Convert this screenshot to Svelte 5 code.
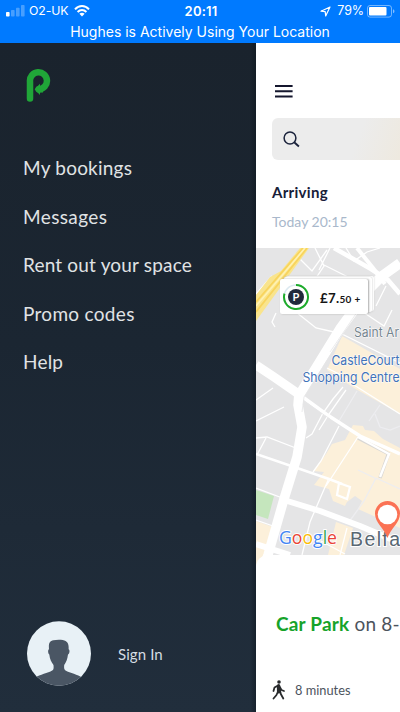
<script>
  const menu = [
    { label: 'My bookings', spacing: 0.22 },
    { label: 'Messages', spacing: 0.38 },
    { label: 'Rent out your space', spacing: 0.18 },
    { label: 'Promo codes', spacing: 0.3 },
    { label: 'Help', spacing: 0.2 }
  ];
  const google = [
    ['G', '#4285f4'], ['o', '#ea4335'], ['o', '#fbbc05'],
    ['g', '#4285f4'], ['l', '#34a853'], ['e', '#ea4335']
  ];
</script>

<div class="phone">
  <header>
    <div class="status">
      <div class="left">
        <svg width="19" height="12" viewBox="0 0 19 12" fill="#fff">
          <rect x="0" y="7" width="3.6" height="4.5" rx=".8" />
          <g opacity=".28"><rect x="5" y="5" width="3.6" height="6.5" rx=".8" /><rect x="10" y="2.8" width="3.6" height="8.7" rx=".8" /><rect x="15" y="0" width="3.6" height="11.5" rx=".8" /></g>
        </svg>
        <span class="carrier">O2-UK</span>
        <svg class="wifi" width="16" height="12" viewBox="0 0 16 12" fill="none" stroke="#fff" stroke-width="2">
          <path d="M1 4.3C5-.1 11-.1 15 4.3M3.6 7c2.6-2.7 6.2-2.7 8.8 0" /><path d="M5.4 8.7c1.5-1.4 3.7-1.4 5.2 0L8 11.4z" fill="#fff" stroke="none" />
        </svg>
      </div>
      <b>20:11</b>
      <div class="right">
        <svg width="11" height="11" viewBox="0 0 11 11" fill="none" stroke="#fff" stroke-width="1.2" stroke-linejoin="round"><path d="M10 1 1 5.2l4.2.5.5 4.3z" /></svg>
        <span class="pct">79%</span>
        <svg class="battery" width="28" height="13" viewBox="0 0 28 13"><rect x=".5" y=".5" width="24" height="11.6" rx="2.5" fill="none" stroke="#fff" stroke-opacity=".45" /><rect x="2" y="2" width="17.5" height="8.6" rx="1" fill="#fff" /><path d="M26 4.3c2 .7 2 3.3 0 4z" fill="#fff" opacity=".5" /></svg>
      </div>
    </div>
    <div class="notice">Hughes is Actively Using Your Location</div>
  </header>

  <div class="body">
    <aside>
      <svg class="logo" width="26" height="34" viewBox="0 0 26 34">
        <path d="M4 29.600V12.700A8.500 8.500 0 1 1 12.700 20.300" fill="none" stroke="#20a638" stroke-width="6.500" stroke-linecap="round" />
        <path d="M8.600 20.300 14 14.800v3h3v5.700h-3v2.600z" fill="#20a638" />
      </svg>
      <nav>
        {#each menu as item}
          <a href="#menu" style="letter-spacing:{item.spacing}px">{item.label}</a>
        {/each}
      </nav>
      <div class="account">
        <svg width="64" height="65" viewBox="0 0 64 65">
          <defs><clipPath id="avatar"><ellipse cx="32" cy="32.5" rx="32" ry="32.2" /></clipPath></defs>
          <g clip-path="url(#avatar)"><rect width="64" height="65" fill="#e8f1f6" />
            <path d="M22.3 33.5c-1.4-1.3-1.6-4.500-.3-5.200-.5-6.200.5-8.400 4.400-9.100 3.700-.8 10-.7 12.200.7 3 1.800 3.200 4.800 3 8.400 1.500.7 1 4.500-.6 5.300-.6 4.800-1.800 7.600-3.800 10.300-.2 2.600-.3 4.400 1.300 5.600C43 52 51 53.500 55 56.500V66H8V56.500c5-3 13-4.500 17.200-7 1.700-1.200 1.500-3 1.300-5.600-2.100-2.600-3.700-5.500-4.200-10.400z" fill="#4a5664" /></g>
        </svg>
        <span>Sign In</span>
      </div>
    </aside>

    <main>
      <section class="top">
        <svg class="burger" width="18" height="13" viewBox="0 0 18 13"><path d="M0 1h17.600M0 6.300h17.600M0 11.600h17.600" stroke="#15172e" stroke-width="2" /></svg>
        <div class="search"><svg width="17" height="17" viewBox="0 0 17 17" fill="none" stroke="#1c243d" stroke-width="1.500"><circle cx="7" cy="7" r="5.900" /><path d="m11.200 11.200 4.700 4.300" stroke-width="1.900" /></svg></div>
        <div class="arriving">Arriving</div>
        <div class="when">Today 20:15</div>
      </section>

      <div class="map">
        <svg width="144" height="318" viewBox="256 248 144 318">
          <rect x="256" y="248" width="144" height="318" fill="#e5e5e6" />
          <g fill="#fcf0da">
            <path d="M342 336 400 369V414L354 388 327 370Z" />
            <path d="M353 425 363 426 365 430 374 431 383 439 400 448V528L378 518 358 509 362 501 355 496 347 502 345 506 333 501 329 489 314 485 324 472 313 471 326 454 332 444 345 440Z" />
            <path d="M256 521 273 527 262 566H256ZM336 522 353 528 344 555H328Z" />
          </g>
          <path d="M256 490 274 496 268 519 256 515Z" fill="#c5e6bd" />
          <g fill="none" stroke="#fff" stroke-width="1.300">
            <path d="M315 248 324 266 314 281 308 301M324 265 350 278M327 250 312 271 295 254M346 248 354 261 367 252 380 248M330 248 319 270M256 294 272 276" />
            <path d="M276 313 272 322 275 327M296 312 316 328 334 332M360 310 384 326 392 310M386 286 376 306M400 363 342 334M327 368 341 375 354 385 400 414" />
            <path d="M256 400 273 388M256 421 284 407M256 438 267 437 301 450M266 438 257 455M343 387 333 399 323 413 312 434 306 438M346 390 329 414 319 430" />
            <path d="M339 426 321 461 313 472M358 437 326 486M256 488 285 499M329 478 322 494 310 522 302 555M389 454 380 477M256 520 273 526M321 541 345 554M347 528 340 555" />
            <path d="M339 483 350 487 347 499 337 495Z" stroke-width="2.200" />
          </g>
          <g fill="none" stroke="#ededf0" stroke-width="1.300">
            <path d="M357 391 339 421M380 405 369 421M375 414 380 427 390 430 400 426M376 478 364 501 349 522M376 478 400 489M358 470 377 479" />
          </g>
          <path d="M388 455 380 478M389 454 358 438" fill="none" stroke="#d9d7d5" stroke-width="3.600" /><path d="M380 477 389 454 358 437" fill="none" stroke="#fff" stroke-width="2.500" />
          <path d="M256 321 309 248H300L281 271 270 277 256 295Z" fill="#f9e48d" /><path d="M256 302 303 248M256 312 307 248" fill="none" stroke="#f8d45c" stroke-width="1.800" /><path d="M256 306 279 279 305 248" fill="none" stroke="#fff2b2" stroke-width="1.500" />
          <g fill="none" stroke="#fff" stroke-linejoin="round">
            <path d="M334 248 371 269 388 280 400 294" stroke-width="4.500" /><path d="M357 248 373 268 385 284" stroke-width="4" />
            <path d="M400 263 382 276 370 288 340 329 300 394" stroke-width="10" />
            <path d="M256 365 274 377 300 395" stroke-width="9" /><path d="M300 395 326 414 360 436 400 454" stroke-width="3.500" />
            <path d="M299 392 298 405 302 427 297 457 284 499 268 555 264 566" stroke-width="9.500" />
            <path d="M256 454 300 469 329 479 342 484" stroke-width="2.500" /><path d="M284 500 320 511 360 526 400 543" stroke-width="6" /><path d="M256 544 290 555" stroke-width="6" />
          </g>
          <path d="M344 333 304 397 302 412M368 296 330 352M304 401 330 419" fill="none" stroke="#e6e6e7" stroke-width=".8" />
          <g class="maplabel">
            <text x="354" y="337" fill="#75858f" textLength="45" lengthAdjust="spacingAndGlyphs">Saint Ar</text>
            <text x="331.500" y="364.500" fill="#4272b8" textLength="68" lengthAdjust="spacingAndGlyphs">CastleCourt</text>
            <text x="302.500" y="381.500" fill="#4272b8" textLength="97" lengthAdjust="spacingAndGlyphs">Shopping Centre</text>
          </g>
          <text class="city" x="350" y="545.500" textLength="50">Belfa</text>
          <text class="google" x="279" y="543.500" textLength="58" lengthAdjust="spacingAndGlyphs">{#each google as [letter, color]}<tspan fill={color}>{letter}</tspan>{/each}</text>
          <path d="M387.500 538C384 528 375 523 375 513.500a12.500 12.500 0 0 1 25 0C400 523 391 528 387.500 538Z" fill="#fb7254" /><circle cx="387.500" cy="514.500" r="9.800" fill="#fff" />
        </svg>
        <div class="price">
          <svg width="28" height="28" viewBox="0 0 28 28"><circle cx="14" cy="14" r="12" fill="none" stroke="#dce9f0" stroke-width="1.700" /><path d="M14 2a12 12 0 1 1-11.500 8.600" fill="none" stroke="#1eab2b" stroke-width="2" /><circle cx="14" cy="14" r="8" fill="#20293b" /><text x="14" y="18" text-anchor="middle" fill="#fff" font-size="11" font-weight="700" font-family="Lato, sans-serif">P</text></svg>
          <strong>£7.<small>50 +</small></strong>
        </div>
      </div>

      <section class="sheet">
        <div class="place"><b>Car Park</b> on 8-</div>
        <div class="walk">
          <svg width="14" height="20" viewBox="0 0 14 20" fill="none" stroke="#292b2d" stroke-width="1.800" stroke-linecap="round" stroke-linejoin="round"><circle cx="7" cy="2" r="1.800" fill="#292b2d" stroke="none" /><path d="M6 5.500 2.500 7.500 1.500 11M7.500 6.500 9.500 10l2.500 1M5.800 6v6L4.500 15l-3 3.500M8 10.500l.8 3.500 2.500 4.500" /><path d="M6.700 5.500V12" stroke-width="3" /></svg>
          <span>8 minutes</span>
        </div>
      </section>
    </main>
  </div>
</div>

<style>
  :global(body) { margin: 0; }
  .phone { width: 400px; height: 712px; overflow: hidden; display: flex; flex-direction: column; background: #fff; font-family: Lato, sans-serif; }
  svg { display: block; flex: none; }
  header { height: 43px; flex: none; background: #007aff; color: #fff; font-family: Inter, sans-serif; }
  .status { height: 22px; display: grid; grid-template-columns: 1fr auto 1fr; align-items: center; font-size: 13px; line-height: 22px; padding-left: 2px; }
  .status b { font-weight: 600; letter-spacing: .2px; }
  .left, .right { display: flex; align-items: center; }
  .left { padding-left: 4px; }
  .carrier { margin-left: 4px; font-size: 12.300px; letter-spacing: -.1px; }
  .wifi { margin-left: 6px; }
  .right { justify-content: flex-end; padding-right: 5px; }
  .pct { margin-left: 6px; font-size: 12.500px; letter-spacing: -.1px; }
  .battery { margin-left: 3px; }
  .notice { height: 21px; line-height: 20px; text-align: center; font-size: 14px; }
  .body { display: flex; height: 669px; }
  aside { box-sizing: border-box; width: 256px; flex: none; padding: 26px 0 0 23px; display: flex; flex-direction: column; background: linear-gradient(90deg, transparent 250px, #0b131b77 256px), linear-gradient(#1a232d, #1b2632 45%, #212e3c); }
  .logo { margin-left: 3px; }
  nav { display: flex; flex-direction: column; margin-top: 41px; }
  nav a { height: 48.600px; line-height: 48.600px; font-size: 19px; color: #e0e3e5; text-decoration: none; white-space: nowrap; }
  .account { margin: auto 0 26px 4px; display: flex; align-items: center; gap: 27px; color: #d6dde3; font-size: 15px; letter-spacing: .1px; }
  main { width: 144px; flex: none; overflow: hidden; display: flex; flex-direction: column; background: #fff; }
  .top { box-sizing: border-box; height: 205px; flex: none; padding: 42px 0 0 16px; color: #182039; }
  .burger { margin-left: 3px; }
  .search { box-sizing: border-box; height: 42px; margin-top: 20px; padding: 13px 0 0 11px; border-radius: 6px 0 0 6px; background: linear-gradient(110deg, #ececec 65%, #eee9df); }
  .arriving { margin-top: 22px; line-height: 20px; font-size: 15px; font-weight: 700; letter-spacing: .3px; }
  .when { margin-top: 10px; line-height: 20px; font-size: 14px; color: #a9b8cb; }
  .map { height: 318px; flex: none; position: relative; }
  .maplabel { font: 13px Inter, sans-serif; stroke: #fff; stroke-width: 1px; paint-order: stroke; }
  .city { font: 500 19.500px "Liberation Sans", sans-serif; fill: #596773; stroke: #fff; stroke-width: 2px; paint-order: stroke; }
  .google { font: 500 19px "Open Sans", sans-serif; stroke: #fff; stroke-width: 2px; paint-order: stroke; }
  .price { position: absolute; left: 24px; top: 31px; width: 88px; height: 35px; display: flex; align-items: center; background: #fff; border-radius: 2px; box-shadow: 1px 0 2px #aaa, 4px -2px 0 #fff, 4px -2px 2px #bbb, 6px -3px 0 #fff, 6px -3px 2px #ccc; }
  .price svg { margin-left: 2px; }
  .price strong { margin-left: 10px; font-size: 13.300px; letter-spacing: .3px; color: #151515; white-space: nowrap; position: relative; top: 1px; }
  .price small { font-size: 10px; }
  .sheet { position: relative; box-sizing: border-box; height: 157px; margin-top: -11px; flex: none; padding: 55px 0 0 16px; background: #fff; border-radius: 12px 0 0; color: #4c535d; }
  .place { padding-left: 4px; white-space: nowrap; font-size: 19px; line-height: 28px; letter-spacing: .2px; }
  .place b { color: #16a32a; }
  .walk { display: flex; align-items: center; margin-top: 42px; font-size: 12.800px; }
  .walk span { margin-left: 9px; }
</style>
